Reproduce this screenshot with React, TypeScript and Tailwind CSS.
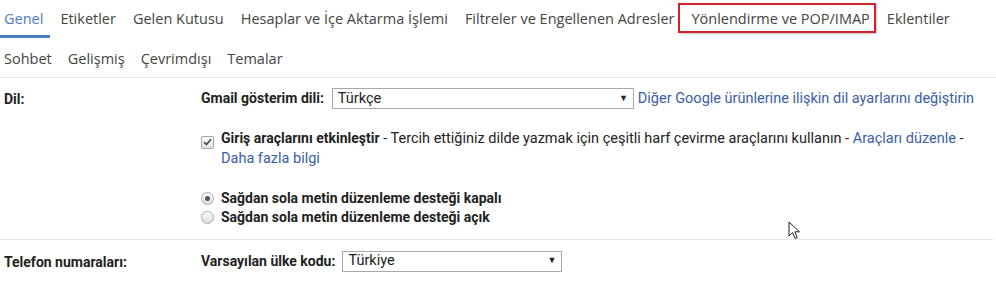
import React from "react";

const tabsTop = [
  "Genel",
  "Etiketler",
  "Gelen Kutusu",
  "Hesaplar ve İçe Aktarma İşlemi",
  "Filtreler ve Engellenen Adresler",
  "Yönlendirme ve POP/IMAP",
  "Eklentiler",
];
const tabsBottom = ["Sohbet", "Gelişmiş", "Çevrimdışı", "Temalar"];

const Checkbox: React.FC = () => (
  <span className="inline-flex h-[13px] w-[13px] shrink-0 items-center justify-center rounded-[2px] border border-[#a5a5a5] bg-gradient-to-b from-[#fdfdfd] to-[#e4e4e4]">
    <svg width="9" height="8" viewBox="0 0 9 8">
      <path d="M1 4.2 L3.4 6.5 L8 1.2" fill="none" stroke="#4a4a4a" strokeWidth="1.7" />
    </svg>
  </span>
);

const Radio: React.FC<{ checked?: boolean }> = ({ checked }) => (
  <span className="inline-flex h-[13px] w-[13px] shrink-0 items-center justify-center rounded-full border border-[#a9a9a9] bg-gradient-to-b from-[#fbfbfb] to-[#dedede]">
    {checked && <span className="h-[5px] w-[5px] rounded-full bg-[#555]" />}
  </span>
);

const SelectBox: React.FC<{ value: string; width: string }> = ({ value, width }) => (
  <div className={`flex h-[21px] items-center justify-between border border-[#a9a9a9] bg-white pl-[5px] pr-[5px] text-[14.5px] font-normal ${width}`}>
    <span>{value}</span>
    <span className="text-[9px] text-[#222]">▼</span>
  </div>
);

export default function App() {
  return (
    <div className="relative h-[281px] w-[996px] overflow-hidden bg-white font-['Roboto',Arial,sans-serif] text-[14px] text-[#222]">
      {/* tabs */}
      <div className="font-['Open_Sans',sans-serif] text-[14.5px] text-[#444]">
        <div className="flex h-[40px] gap-[17px] pl-[4px]">
          {tabsTop.map((t, i) => (
            <div key={t} className={`relative flex items-center pb-[3px] ${i === 0 ? "text-[#4c7cc6]" : ""}`}>
              {t}
              {i === 0 && <span className="absolute bottom-[2px] -left-[4px] h-[3px] w-[50px] bg-[#4c7cc6]" />}
              {i === 5 && (
                <span className="absolute -left-[13px] -right-[6px] top-[3px] h-[30px] border-2 border-[#d0222c] shadow-[1px_1px_2px_rgba(0,0,0,0.25)]" />
              )}
            </div>
          ))}
        </div>
        <div className="flex h-[38px] items-center gap-[16px] border-b border-[#e6e6e6] pl-[4px]">
          {tabsBottom.map((t) => (
            <div key={t}>{t}</div>
          ))}
        </div>
      </div>

      {/* language */}
      <div className="mr-[3px] flex border-b border-[#e6e6e6] pt-[10px] pb-[12px]">
        <div className="w-[201px] shrink-0 pl-[4px] pt-[1px] font-bold">Dil:</div>
        <div className="flex flex-col">
          <div className="flex h-[21px] items-center">
            <span className="mr-[8px] font-bold">Gmail gösterim dili:</span>
            <SelectBox value="Türkçe" width="w-[302px]" />
            <a className="ml-[4px] text-[14.5px] text-[#3a5ea8]">Diğer Google ürünlerine ilişkin dil ayarlarını değiştirin</a>
          </div>
          <div className="mt-[19px] flex gap-[7px]">
            <div className="pt-[3px]">
              <Checkbox />
            </div>
            <div className="text-[14.5px] leading-[20px]">
              <span className="text-[14px] font-bold">Giriş araçlarını etkinleştir</span>
              <span> - Tercih ettiğiniz dilde yazmak için çeşitli harf çevirme araçlarını kullanın - </span>
              <a className="text-[#3a5ea8]">Araçları düzenle</a>
              <span> -</span>
              <br />
              <a className="text-[#3a5ea8]">Daha fazla bilgi</a>
            </div>
          </div>
          <div className="mt-[20px] flex flex-col font-bold leading-[19px]">
            <label className="flex items-center gap-[7px]">
              <Radio checked />
              Sağdan sola metin düzenleme desteği kapalı
            </label>
            <label className="flex items-center gap-[7px]">
              <Radio />
              Sağdan sola metin düzenleme desteği açık
            </label>
          </div>
        </div>
      </div>

      {/* phone */}
      <div className="flex pt-[10px]">
        <div className="w-[201px] shrink-0 pl-[4px] pt-[2px] font-bold">Telefon numaraları:</div>
        <div className="flex h-[22px] items-center">
          <span className="mr-[7px] font-bold">Varsayılan ülke kodu:</span>
          <SelectBox value="Türkiye" width="w-[220px]" />
        </div>
      </div>

      {/* mouse pointer */}
      <svg className="absolute left-[788px] top-[221px]" width="13" height="19" viewBox="0 0 13 19">
        <path d="M1 1 L1 15 L4.5 11.5 L7 17.5 L9.2 16.6 L6.8 10.8 L11.5 10.8 Z" fill="#fff" stroke="#222" strokeWidth="1" strokeLinejoin="round" />
      </svg>
    </div>
  );
}
